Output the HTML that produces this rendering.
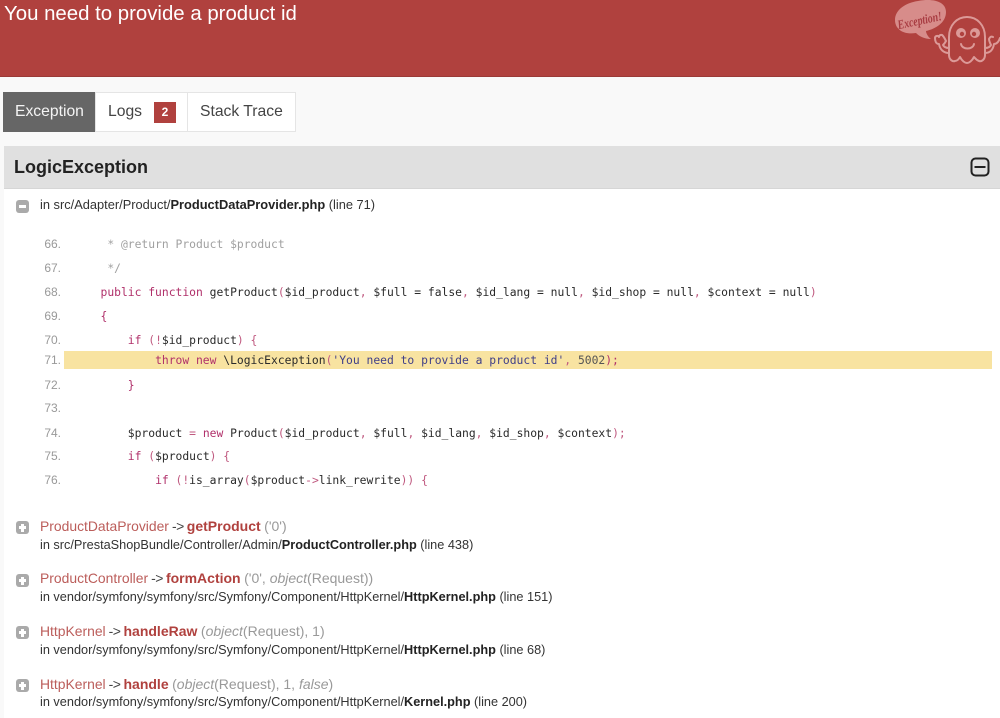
<!DOCTYPE html>
<html><head><meta charset="utf-8"><style>
html,body{margin:0;padding:0;width:1000px;height:718px;overflow:hidden;background:#f9f9f9;font-family:"Liberation Sans",Arial,sans-serif;color:#222}
.a{position:absolute;white-space:pre;line-height:16px}
#hd{position:absolute;left:0;top:0;width:1000px;height:77px;background:#b0413e;border-bottom:1px solid #9a3a37;box-sizing:border-box}
.tab{position:absolute;top:92px;height:40px;box-sizing:border-box;background:#fff;border:1px solid #e5e5e5;font-size:15.7px;line-height:38px;color:#444;text-align:left;white-space:pre}
#panel{position:absolute;left:4px;top:189px;width:996px;height:529px;background:#fff}
#ph{position:absolute;left:4px;top:146px;width:996px;height:43px;background:#e0e0e0;border-bottom:1px solid #d6d6d6;box-sizing:border-box}
.n{position:absolute;left:30px;width:31px;text-align:right;font:12px/16px "Liberation Sans",sans-serif;color:#999;white-space:pre}
.c{position:absolute;left:100.5px;font:11.34px/16px "DejaVu Sans Mono",monospace;white-space:pre;color:#2a2a2a}
.k{color:#b0306a}.o{color:#c05a80}.m{color:#a0a0a0}.s{color:#3f3f88}.d{color:#555}
.t1{position:absolute;left:40px;font-size:14px;line-height:18px;white-space:pre;color:#999}
.t1 b{color:#b0413e;margin:0 3.5px 0 3px}
.cl{color:#b0413e;opacity:.85;font-size:13.9px}
.ar{color:#444;margin-left:3px;letter-spacing:-.5px}
.t2{position:absolute;left:40px;font-size:12.72px;line-height:16px;white-space:pre;color:#333}
.t2 b{color:#222}
.ic{position:absolute;left:15.5px;width:13.5px;height:13px;background:#aaa;border-radius:3px}
.ic:before{content:"";position:absolute;left:3px;top:5px;width:7.5px;height:3px;background:#fff}
.p:after{content:"";position:absolute;left:5.25px;top:2.5px;width:3px;height:8px;background:#fff}
</style></head><body>
<div id="hd"></div>
<div class="a" style="left:4px;top:2px;font-size:20.4px;line-height:25px;color:#fff">You need to provide a product id</div>
<svg style="position:absolute;left:890px;top:0" width="110" height="72" viewBox="0 0 110 72">
<path d="M5 20C5 10 15 3 28 1C44 -2 56 2 56 12C56 23 45 29 36 31C36 33 38 37 41 39C34 39 29 36 26 33C13 35 5 29 5 20Z" fill="#d78c8a"/>
<text x="7" y="25" font-family="Liberation Serif,serif" font-style="italic" font-weight="bold" font-size="13" textLength="45" lengthAdjust="spacingAndGlyphs" fill="#a83c42" transform="rotate(-12 28 20)">Exception!</text>
<g fill="none" stroke="#dc9a98" stroke-width="2" stroke-linecap="round" stroke-linejoin="round">
<path d="M59 37C59 25 67 17 77 17C87 17 95 25 95 37V55C95 59 92 62 89 61C86 60 85 58 84 57C82 61 79 63 77 63C75 63 72 61 70 57C69 59 67 61 65 61C62 62 59 59 59 55Z"/>
<path d="M71 44C72 50 83 50 84 44"/>
<path d="M59 53C54 53 50 50 49 44C46 44 45 41 45 38C45 36 48 35 49 37C49 35 52 34 53 36C54 37 55 39 56 41C55 43 54 44 53 45C54 47 56 48 59 48"/>
<path d="M95 53C100 53 103 50 104 44C107 44 109 41 110 38"/>
<path d="M95 48C98 48 100 47 101 45C100 43 99 41 99 39C100 37 101 36 103 37"/>
</g>
<circle cx="71" cy="33" r="5" fill="#dc9a98"/><circle cx="85" cy="33" r="5" fill="#dc9a98"/>
<circle cx="72" cy="34" r="2.2" fill="#b0413e"/><circle cx="84" cy="34" r="2.2" fill="#b0413e"/>
</svg>

<div class="tab" style="left:3px;width:93px;background:#666;border-color:#666;color:#f4f4f4;padding-left:11px">Exception</div>
<div class="tab" style="left:95px;width:93px;padding-left:12px">Logs</div>
<div class="a" style="left:154px;top:102px;width:22px;height:21px;background:#b0413e;color:#fff;font-size:12px;font-weight:bold;line-height:21px;text-align:center">2</div>
<div class="tab" style="left:187px;width:109px;padding-left:12px">Stack Trace</div>

<div id="ph"></div>
<div class="a" style="left:14px;top:156px;font-size:18px;line-height:22px;font-weight:bold;color:#222">LogicException</div>
<svg style="position:absolute;left:970px;top:157px" width="20" height="20"><rect x="1.5" y="1.5" width="17" height="17" rx="4" fill="none" stroke="#222" stroke-width="2"/><rect x="4.5" y="9" width="11" height="2" fill="#222"/></svg>
<div id="panel"></div>

<div class="ic" style="top:200px"></div>
<div class="t2" style="top:197px;font-size:12.84px">in src/Adapter/Product/<b>ProductDataProvider.php</b> (line 71)</div>

<div class="a" style="left:64px;top:351px;width:928px;height:18px;background:#f8e3a1"></div>

<div class="n" style="top:236px">66.</div><div class="c m" style="top:236px"> * @return Product $product</div>
<div class="n" style="top:260px">67.</div><div class="c m" style="top:260px"> */</div>
<div class="n" style="top:284px">68.</div><div class="c" style="top:284px"><span class="k">public function </span>getProduct<span class="o">(</span>$id_product<span class="o">, </span>$full = false<span class="o">, </span>$id_lang = null<span class="o">, </span>$id_shop = null<span class="o">, </span>$context = null<span class="o">)</span></div>
<div class="n" style="top:308px">69.</div><div class="c k" style="top:308px">{</div>
<div class="n" style="top:332px">70.</div><div class="c" style="top:332px">    <span class="k">if </span><span class="o">(!</span>$id_product<span class="o">) {</span></div>
<div class="n" style="top:352px">71.</div><div class="c" style="top:352px">        <span class="k">throw new </span>\LogicException<span class="o">(</span><span class="s">'You need to provide a product id'</span><span class="o">, </span><span class="d">5002</span><span class="k">);</span></div>
<div class="n" style="top:377px">72.</div><div class="c k" style="top:377px">    }</div>
<div class="n" style="top:400px">73.</div>
<div class="n" style="top:425px">74.</div><div class="c" style="top:425px">    $product <span class="o">= </span><span class="k">new </span>Product<span class="o">(</span>$id_product<span class="o">, </span>$full<span class="o">, </span>$id_lang<span class="o">, </span>$id_shop<span class="o">, </span>$context<span class="o">);</span></div>
<div class="n" style="top:448px">75.</div><div class="c" style="top:448px">    <span class="k">if </span><span class="o">(</span>$product<span class="o">) {</span></div>
<div class="n" style="top:472px">76.</div><div class="c" style="top:472px">        <span class="k">if </span><span class="o">(!</span>is_array<span class="o">(</span>$product<span class="o">-&gt;</span>link_rewrite<span class="o">)) {</span></div>

<div class="ic p" style="top:521px"></div>
<div class="t1" style="top:517px"><span class="cl">ProductDataProvider</span><span class="ar">-&gt;</span><b>getProduct</b>('0')</div>
<div class="t2" style="top:537px">in src/PrestaShopBundle/Controller/Admin/<b>ProductController.php</b> (line 438)</div>

<div class="ic p" style="top:574px"></div>
<div class="t1" style="top:569px"><span class="cl">ProductController</span><span class="ar">-&gt;</span><b>formAction</b>('0', <i>object</i>(Request))</div>
<div class="t2" style="top:589px">in vendor/symfony/symfony/src/Symfony/Component/HttpKernel/<b>HttpKernel.php</b> (line 151)</div>

<div class="ic p" style="top:626px"></div>
<div class="t1" style="top:622px"><span class="cl">HttpKernel</span><span class="ar">-&gt;</span><b>handleRaw</b>(<i>object</i>(Request), 1)</div>
<div class="t2" style="top:642px">in vendor/symfony/symfony/src/Symfony/Component/HttpKernel/<b>HttpKernel.php</b> (line 68)</div>

<div class="ic p" style="top:679px"></div>
<div class="t1" style="top:675px"><span class="cl">HttpKernel</span><span class="ar">-&gt;</span><b>handle</b>(<i>object</i>(Request), 1, <i>false</i>)</div>
<div class="t2" style="top:694px">in vendor/symfony/symfony/src/Symfony/Component/HttpKernel/<b>Kernel.php</b> (line 200)</div>
</body></html>
